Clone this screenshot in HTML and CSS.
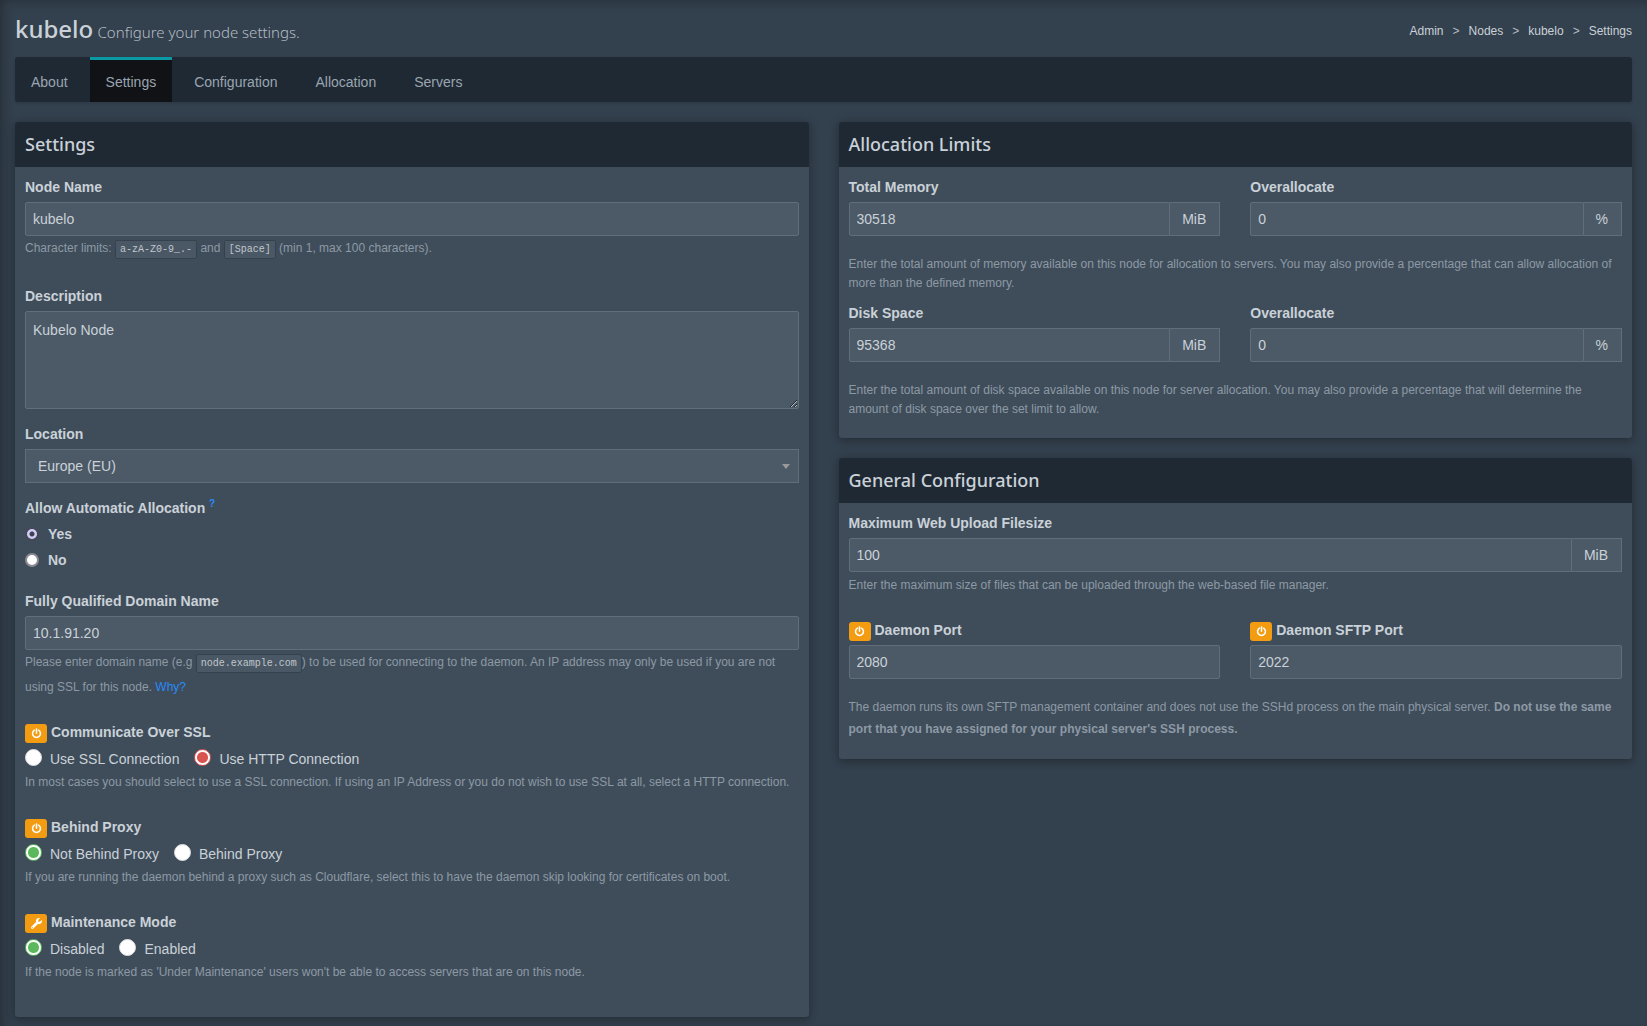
FILE: index.html
```html
<!DOCTYPE html>
<html lang="en">
<head>
<meta charset="utf-8">
<meta name="viewport" content="width=device-width, initial-scale=1">
<title>kubelo: Settings</title>
<link rel="stylesheet" href="styles.css">
</head>
<body>
<svg class="sprite" aria-hidden="true">
  <symbol id="power" viewBox="0 0 12 12">
    <path d="M3.7 2.4A4.3 4.3 0 1 0 8.3 2.4M6 1V5.6" fill="none" stroke="currentColor" stroke-width="1.7" stroke-linecap="round"/>
  </symbol>
  <symbol id="wrench" viewBox="0 0 512 512">
    <path fill="currentColor" d="M507.7 109.1c-2.200-9-13.500-12.100-20.100-5.500l-74.400 74.400-67.900-11.300L334 98.900l74.400-74.400c6.600-6.600 3.400-17.900-5.700-20.200-47.400-11.700-99.600.9-136.600 37.900-39.600 39.600-50.600 97.100-34.100 147.200L18.700 402.800c-25 25-25 65.500 0 90.500s65.500 25 90.500 0l213.200-213.200c50.100 16.700 107.500 5.700 147.400-34.200 37.100-37.100 49.700-89.300 37.900-136.800zM64 472c-13.200 0-24-10.800-24-24s10.700-24 24-24 24 10.700 24 24-10.700 24-24 24z"/>
  </symbol>
</svg>
<div class="page">
  <header class="page-header">
    <h1>kubelo <small>Configure your node settings.</small></h1>
    <nav aria-label="Breadcrumb">
      <ol class="breadcrumb">
        <li><a href="#">Admin</a></li>
        <li><a href="#">Nodes</a></li>
        <li><a href="#">kubelo</a></li>
        <li>Settings</li>
      </ol>
    </nav>
  </header>

  <nav class="tabs" aria-label="Node">
    <a href="#">About</a>
    <a href="#" class="active" aria-current="page">Settings</a>
    <a href="#">Configuration</a>
    <a href="#">Allocation</a>
    <a href="#">Servers</a>
  </nav>

  <form class="columns">
    <section class="box">
      <h2>Settings</h2>
      <div class="box-body">
        <div class="group">
          <label for="name">Node Name</label>
          <input class="control" type="text" id="name" value="kubelo">
          <p class="help help-code">Character limits: <code>a-zA-Z0-9_.-</code> and <code>[Space]</code> (min 1, max 100 characters).</p>
        </div>
        <div class="group">
          <label for="description">Description</label>
          <textarea class="control" id="description">Kubelo Node</textarea>
        </div>
        <div class="group">
          <label for="location">Location</label>
          <select class="control" id="location"><option>Europe (EU)</option></select>
        </div>
        <fieldset class="group stacked">
          <legend>Allow Automatic Allocation <sup><a href="#">?</a></sup></legend>
          <label class="choice"><input type="radio" name="public" checked>Yes</label>
          <label class="choice"><input type="radio" name="public">No</label>
        </fieldset>
        <div class="group">
          <label for="fqdn">Fully Qualified Domain Name</label>
          <input class="control" type="text" id="fqdn" value="10.1.91.20">
          <p class="help help-code help-tall">Please enter domain name (e.g <code>node.example.com</code>) to be used for connecting to the daemon. An IP address may only be used if you are not using SSL for this node. <a href="#">Why?</a></p>
        </div>
        <fieldset class="group">
          <legend class="badged"><span class="badge"><svg><use href="#power"/></svg></span>Communicate Over SSL</legend>
          <div class="choices">
            <label><input type="radio" name="scheme" class="success">Use SSL Connection</label>
            <label><input type="radio" name="scheme" class="danger" checked>Use HTTP Connection</label>
          </div>
          <p class="help">In most cases you should select to use a SSL connection. If using an IP Address or you do not wish to use SSL at all, select a HTTP connection.</p>
        </fieldset>
        <fieldset class="group">
          <legend class="badged"><span class="badge"><svg><use href="#power"/></svg></span>Behind Proxy</legend>
          <div class="choices">
            <label><input type="radio" name="proxy" class="success" checked>Not Behind Proxy</label>
            <label><input type="radio" name="proxy" class="success">Behind Proxy</label>
          </div>
          <p class="help">If you are running the daemon behind a proxy such as Cloudflare, select this to have the daemon skip looking for certificates on boot.</p>
        </fieldset>
        <fieldset class="group">
          <legend class="badged"><span class="badge"><svg><use href="#wrench"/></svg></span>Maintenance Mode</legend>
          <div class="choices">
            <label><input type="radio" name="maintenance" class="success" checked>Disabled</label>
            <label><input type="radio" name="maintenance" class="success">Enabled</label>
          </div>
          <p class="help">If the node is marked as 'Under Maintenance' users won't be able to access servers that are on this node.</p>
        </fieldset>
      </div>
    </section>

    <div class="column">
      <section class="box">
        <h2>Allocation Limits</h2>
        <div class="box-body">
          <div class="pair">
            <div>
              <label for="memory">Total Memory</label>
              <div class="addon"><input class="control" type="text" id="memory" value="30518"><span>MiB</span></div>
            </div>
            <div>
              <label for="memory-over">Overallocate</label>
              <div class="addon"><input class="control" type="text" id="memory-over" value="0"><span>%</span></div>
            </div>
          </div>
          <p class="note">Enter the total amount of memory available on this node for allocation to servers. You may also provide a percentage that can allow allocation of more than the defined memory.</p>
          <div class="pair">
            <div>
              <label for="disk">Disk Space</label>
              <div class="addon"><input class="control" type="text" id="disk" value="95368"><span>MiB</span></div>
            </div>
            <div>
              <label for="disk-over">Overallocate</label>
              <div class="addon"><input class="control" type="text" id="disk-over" value="0"><span>%</span></div>
            </div>
          </div>
          <p class="note">Enter the total amount of disk space available on this node for server allocation. You may also provide a percentage that will determine the amount of disk space over the set limit to allow.</p>
        </div>
      </section>

      <section class="box">
        <h2>General Configuration</h2>
        <div class="box-body">
          <div class="group">
            <label for="upload">Maximum Web Upload Filesize</label>
            <div class="addon"><input class="control" type="text" id="upload" value="100"><span>MiB</span></div>
            <p class="help">Enter the maximum size of files that can be uploaded through the web-based file manager.</p>
          </div>
          <div class="pair">
            <div>
              <label class="badged" for="port"><span class="badge"><svg><use href="#power"/></svg></span>Daemon Port</label>
              <input class="control" type="text" id="port" value="2080">
            </div>
            <div>
              <label class="badged" for="sftp"><span class="badge"><svg><use href="#power"/></svg></span>Daemon SFTP Port</label>
              <input class="control" type="text" id="sftp" value="2022">
            </div>
          </div>
          <p class="note note-loose">The daemon runs its own SFTP management container and does not use the SSHd process on the main physical server. <strong>Do not use the same port that you have assigned for your physical server's SSH process.</strong></p>
        </div>
      </section>
    </div>
  </form>
</div>
</body>
</html>
```
FILE: styles.css
```css
:root {
  --bg: #33404d;
  --dark: #1f2933;
  --panel: #3f4d5a;
  --field: #4c5a67;
  --line: #606d7b;
  --text: #cad1d8;
  --muted: #9aa5b1;
  --help: #8d99a5;
  --link: #288afb;
  --orange: #f39c12;
}

* { box-sizing: border-box; }

body {
  margin: 0;
  background: var(--bg);
  color: var(--text);
  font: 14px/20px "Liberation Sans", Arial, sans-serif;
}

a { color: var(--link); text-decoration: none; }

.sprite { display: none; }

.page {
  min-height: 100vh;
  padding: 15px 15px 10px;
  box-shadow: inset 6px 4px 12px -4px rgba(0, 0, 0, .3);
}

.page-header {
  display: flex;
  justify-content: space-between;
  height: 42px;
}

h1 {
  margin: 0;
  font: 500 24px/28px "Noto Sans", sans-serif;
}

h1 small {
  font-size: 15px;
  font-weight: 300;
  margin-left: -2px;
  color: #b4bdc6;
}

.breadcrumb {
  display: flex;
  margin: 6px 0 0;
  padding: 0;
  list-style: none;
  font-size: 12px;
}

.breadcrumb a { color: inherit; }

.breadcrumb li + li::before {
  content: ">";
  margin: 0 9px;
  color: #b4bdc6;
}

.tabs {
  display: flex;
  gap: 6px;
  margin-bottom: 20px;
  border-radius: 3px;
  background: var(--dark);
  box-shadow: 0 1px 3px rgba(0, 0, 0, .15);
  overflow: hidden;
}

.tabs a {
  padding: 12px 16px 10px;
  border-top: 3px solid transparent;
  color: var(--muted);
}

.tabs .active {
  background: #101216;
  border-color: #099aa5;
}

.columns {
  display: grid;
  grid-template-columns: 1fr 1fr;
  gap: 30px;
  align-items: start;
}

.column { display: grid; gap: 20px; }

.box {
  border-radius: 3px;
  background: var(--panel);
  box-shadow: 0 4px 8px rgba(0, 0, 0, .12), 0 2px 4px rgba(0, 0, 0, .08), 0 0 12px rgba(0, 0, 0, .12);
}

h2 {
  margin: 0;
  padding: 10px;
  border-radius: 3px 3px 0 0;
  background: var(--dark);
  font: 500 18px/25px "Noto Sans", sans-serif;
}

.box-body { padding: 10px; }

.group {
  display: flow-root;
  margin: 0 0 15px;
  padding: 0;
  border: 0;
}

label, legend {
  display: block;
  margin-bottom: 5px;
  padding: 0;
  font-weight: bold;
}

.control {
  display: block;
  width: 100%;
  height: 34px;
  padding: 6px 7px;
  border: 1px solid var(--line);
  border-radius: 2px;
  outline: 0;
  background: var(--field);
  color: var(--text);
  font: inherit;
}

textarea.control { height: 98px; padding-top: 8px; }

select.control {
  padding: 0 12px;
  border-radius: 0;
  appearance: none;
  background: var(--field) url("data:image/svg+xml,%3Csvg xmlns='http://www.w3.org/2000/svg' width='8' height='5'%3E%3Cpath d='M0 0h8L4 5z' fill='%23999'/%3E%3C/svg%3E") no-repeat right 8px center;
}

.help, .note {
  margin: 3px 0 10px;
  color: var(--help);
  font-size: 12px;
}

.help-code { margin: 0 0 10px; line-height: 25px; }
.help-tall { margin-bottom: 7px; }

.note { margin: 19px 0 10px; line-height: 19px; }
.note:last-child { margin-bottom: 9px; }
.note-loose { line-height: 22px; }
.note-loose:last-child { margin-top: 17px; }

code {
  padding: 3px 4px;
  border: 1px solid #35414d;
  border-radius: 2px;
  background: #4a5764;
  color: #c1c7cd;
  font: 10px "Liberation Mono", monospace;
}

sup { font-size: 10px; line-height: 0; }

.stacked { margin-bottom: 21px; }

.choice {
  display: flex;
  align-items: center;
  gap: 9px;
  margin: 1px 0 6px;
}

.choice:last-child { margin-bottom: 0; }
.choice + .choice { margin-top: 0; }

input[type="radio"] { appearance: none; margin: 0; }

.choice input {
  width: 14px;
  height: 14px;
  border: 2px solid #8b8894;
  border-radius: 50%;
  background: #fff;
}

.choice input:checked {
  border-color: #48475a;
  background: radial-gradient(circle, #41414f 2px, #d0d0f7 3px);
}

.choices { display: flex; gap: 15px; padding-top: 2px; }

.choices label {
  display: flex;
  gap: 8px;
  margin: 0;
  font-weight: normal;
}

.choices input {
  width: 17px;
  height: 17px;
  border: 1px solid #ddd;
  border-radius: 50%;
  background: #fff;
}

.choices .success:checked {
  border-color: #5cb85c;
  background: radial-gradient(circle, #5cb85c 5px, #fff 6px);
}

.choices .danger:checked {
  border-color: #d9534f;
  background: radial-gradient(circle, #d9534f 5px, #fff 6px);
}

.badged {
  display: flex;
  gap: 4px;
  height: 21px;
  margin-bottom: 4px;
}

.badge {
  display: grid;
  place-items: center;
  align-self: end;
  width: 22px;
  height: 19px;
  border-radius: 3px;
  background: var(--orange);
  color: #fff;
}

.badge svg { width: 11px; height: 11px; }

.pair {
  display: grid;
  grid-template-columns: 1fr 1fr;
  gap: 30px;
}

.addon { display: flex; }

.addon .control {
  flex: 1;
  min-width: 0;
  border-radius: 2px 0 0 2px;
}

.addon span {
  padding: 6px 13px 6px 12px;
  border: 1px solid var(--line);
  border-left: 0;
  background: var(--field);
}
```
